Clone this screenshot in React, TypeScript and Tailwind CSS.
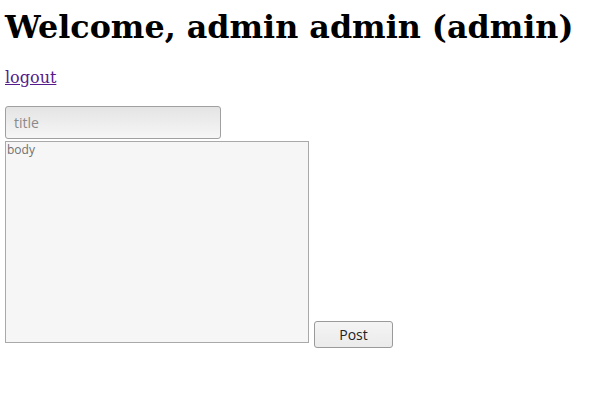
export default function App() {
  return (
    <div className="p-[5px] bg-white min-h-[414px] text-black">
      <h1 className="mt-[3px] mb-0 text-[31.75px] font-bold leading-[37px]" style={{ fontFamily: '"DejaVu Serif", serif' }}>
        Welcome, admin admin (admin)
      </h1>
      <div className="mt-[23px] text-[16px] leading-[19px]" style={{ fontFamily: '"DejaVu Serif", serif' }}>
        <a href="#" className="text-[#551a8b] underline">logout</a>
      </div>
      <form className="mt-[19px] flex flex-col items-start" style={{ fontFamily: '"Open Sans", sans-serif' }}>
        <input
          type="text"
          placeholder="title"
          className="w-[216px] h-[33px] px-[8px] rounded-[3px] border border-[#a0a0a0] bg-gradient-to-b from-[#e4e4e4] to-[#f6f6f6] text-[14px] placeholder:text-[#8a8a8a] outline-none"
        />
        <div className="mt-[2px] flex items-start gap-[5px]">
          <textarea
            placeholder="body"
            className="w-[304px] h-[202px] px-[1px] py-0 border border-[#a9a9a9] bg-[#f6f6f6] text-[12px] leading-[16px] placeholder:text-[#707070] resize-none outline-none"
          />
          <button
            type="button"
            className="mt-[180px] w-[79px] h-[27px] rounded-[3px] border border-[#9a9a9a] bg-gradient-to-b from-[#f4f4f4] to-[#ebebeb] text-[14px] text-[#222]"
          >
            Post
          </button>
        </div>
      </form>
    </div>
  );
}
